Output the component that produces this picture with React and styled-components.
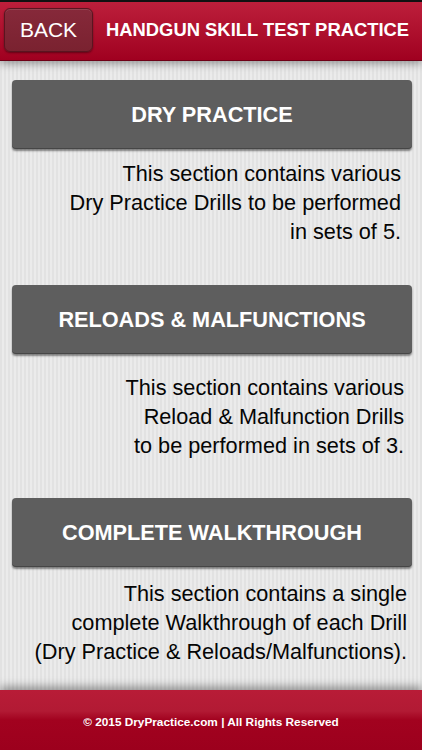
import React from "react";
import styled, { createGlobalStyle } from "styled-components";

const GlobalStyle = createGlobalStyle`
  html, body {
    margin: 0;
    padding: 0;
    height: 100%;
  }
  body {
    font-family: "Liberation Sans", Arial, Helvetica, sans-serif;
    background: #e5e5e5;
  }
  #root {
    height: 100%;
  }
`;

const Screen = styled.div`
  height: 100vh;
  display: flex;
  flex-direction: column;
  overflow: hidden;
  background:
    repeating-linear-gradient(90deg, #e2e2e2 0 2px, #ebebeb 2px 4px);
`;

const Header = styled.header`
  flex: 0 0 auto;
  height: 58px;
  border-top: 2px solid #111;
  background: linear-gradient(180deg, #bd1f3b 0%, #b0122f 45%, #a00020 100%);
  border-bottom: 1px solid #6e0016;
  display: flex;
  align-items: center;
  padding: 0 4px;
  gap: 13px;
  position: relative;
  z-index: 1;
  box-shadow: 0 3px 8px rgba(0, 0, 0, 0.35);
`;

const BackButton = styled.button`
  width: 89px;
  height: 44px;
  border-radius: 6px;
  border: 1px solid #5a1520;
  background: linear-gradient(180deg, #86293a 0%, #7a2230 100%);
  box-shadow: 0 1px 2px rgba(0, 0, 0, 0.4), inset 0 1px 0 rgba(255, 255, 255, 0.12);
  color: #fff;
  font-family: inherit;
  font-size: 21px;
  padding: 0;
  margin-top: -2px;
`;

const Title = styled.h1`
  margin: 0;
  color: #fff;
  font-size: 18.4px;
  font-weight: bold;
  white-space: nowrap;
  margin-top: -2px;
`;

const Main = styled.main`
  flex: 1 1 auto;
  padding: 19px 0 0;
  overflow: hidden;
`;

const Section = styled.section`
  margin-bottom: ${(p) => p.$after}px;
`;

const ActionButton = styled.button`
  display: block;
  width: 400px;
  height: 69px;
  margin: 0 auto 0 12px;
  border: none;
  border-radius: 4px;
  background: #5e5e5e;
  box-shadow: 0 2px 2px rgba(0, 0, 0, 0.45), inset 0 -1px 0 rgba(0, 0, 0, 0.25);
  color: #fff;
  font-family: inherit;
  font-size: 21.7px;
  font-weight: bold;
`;

const Description = styled.p`
  margin: ${(p) => p.$gap}px 0 0;
  padding: 0 ${(p) => p.$right}px 0 3px;
  text-align: right;
  color: #050505;
  font-size: 21.7px;
  line-height: 29px;
  white-space: nowrap;
`;

const Footer = styled.footer`
  flex: 0 0 auto;
  height: 60px;
  background: linear-gradient(180deg, #b81c37 0%, #b21a34 35%, #a2021f 50%, #9c001d 100%);
  display: flex;
  align-items: center;
  justify-content: center;
  padding-top: 3px;
  box-sizing: border-box;
  color: #fff;
  font-size: 11.8px;
  font-weight: bold;
  position: relative;
  box-shadow: 0 -4px 8px rgba(0, 0, 0, 0.35);
`;

const sections = [
  {
    title: "DRY PRACTICE",
    lines: ["This section contains various", "Dry Practice Drills to be performed", "in sets of 5."],
    gap: 10,
    right: 21,
    after: 39,
  },
  {
    title: "RELOADS & MALFUNCTIONS",
    lines: ["This section contains various", "Reload & Malfunction Drills", "to be performed in sets of 3."],
    gap: 19,
    right: 18,
    after: 38,
  },
  {
    title: "COMPLETE WALKTHROUGH",
    lines: ["This section contains a single", "complete Walkthrough of each Drill", "(Dry Practice & Reloads/Malfunctions)."],
    gap: 12,
    right: 15,
    after: 0,
  },
];

export default function App() {
  return (
    <>
      <GlobalStyle />
      <Screen>
        <Header>
          <BackButton>BACK</BackButton>
          <Title>HANDGUN SKILL TEST PRACTICE</Title>
        </Header>
        <Main>
          {sections.map((s) => (
            <Section key={s.title} $after={s.after}>
              <ActionButton>{s.title}</ActionButton>
              <Description $gap={s.gap} $right={s.right}>
                {s.lines.map((l, i) => (
                  <React.Fragment key={i}>
                    {l}
                    {i < s.lines.length - 1 && <br />}
                  </React.Fragment>
                ))}
              </Description>
            </Section>
          ))}
        </Main>
        <Footer>© 2015 DryPractice.com | All Rights Reserved</Footer>
      </Screen>
    </>
  );
}
